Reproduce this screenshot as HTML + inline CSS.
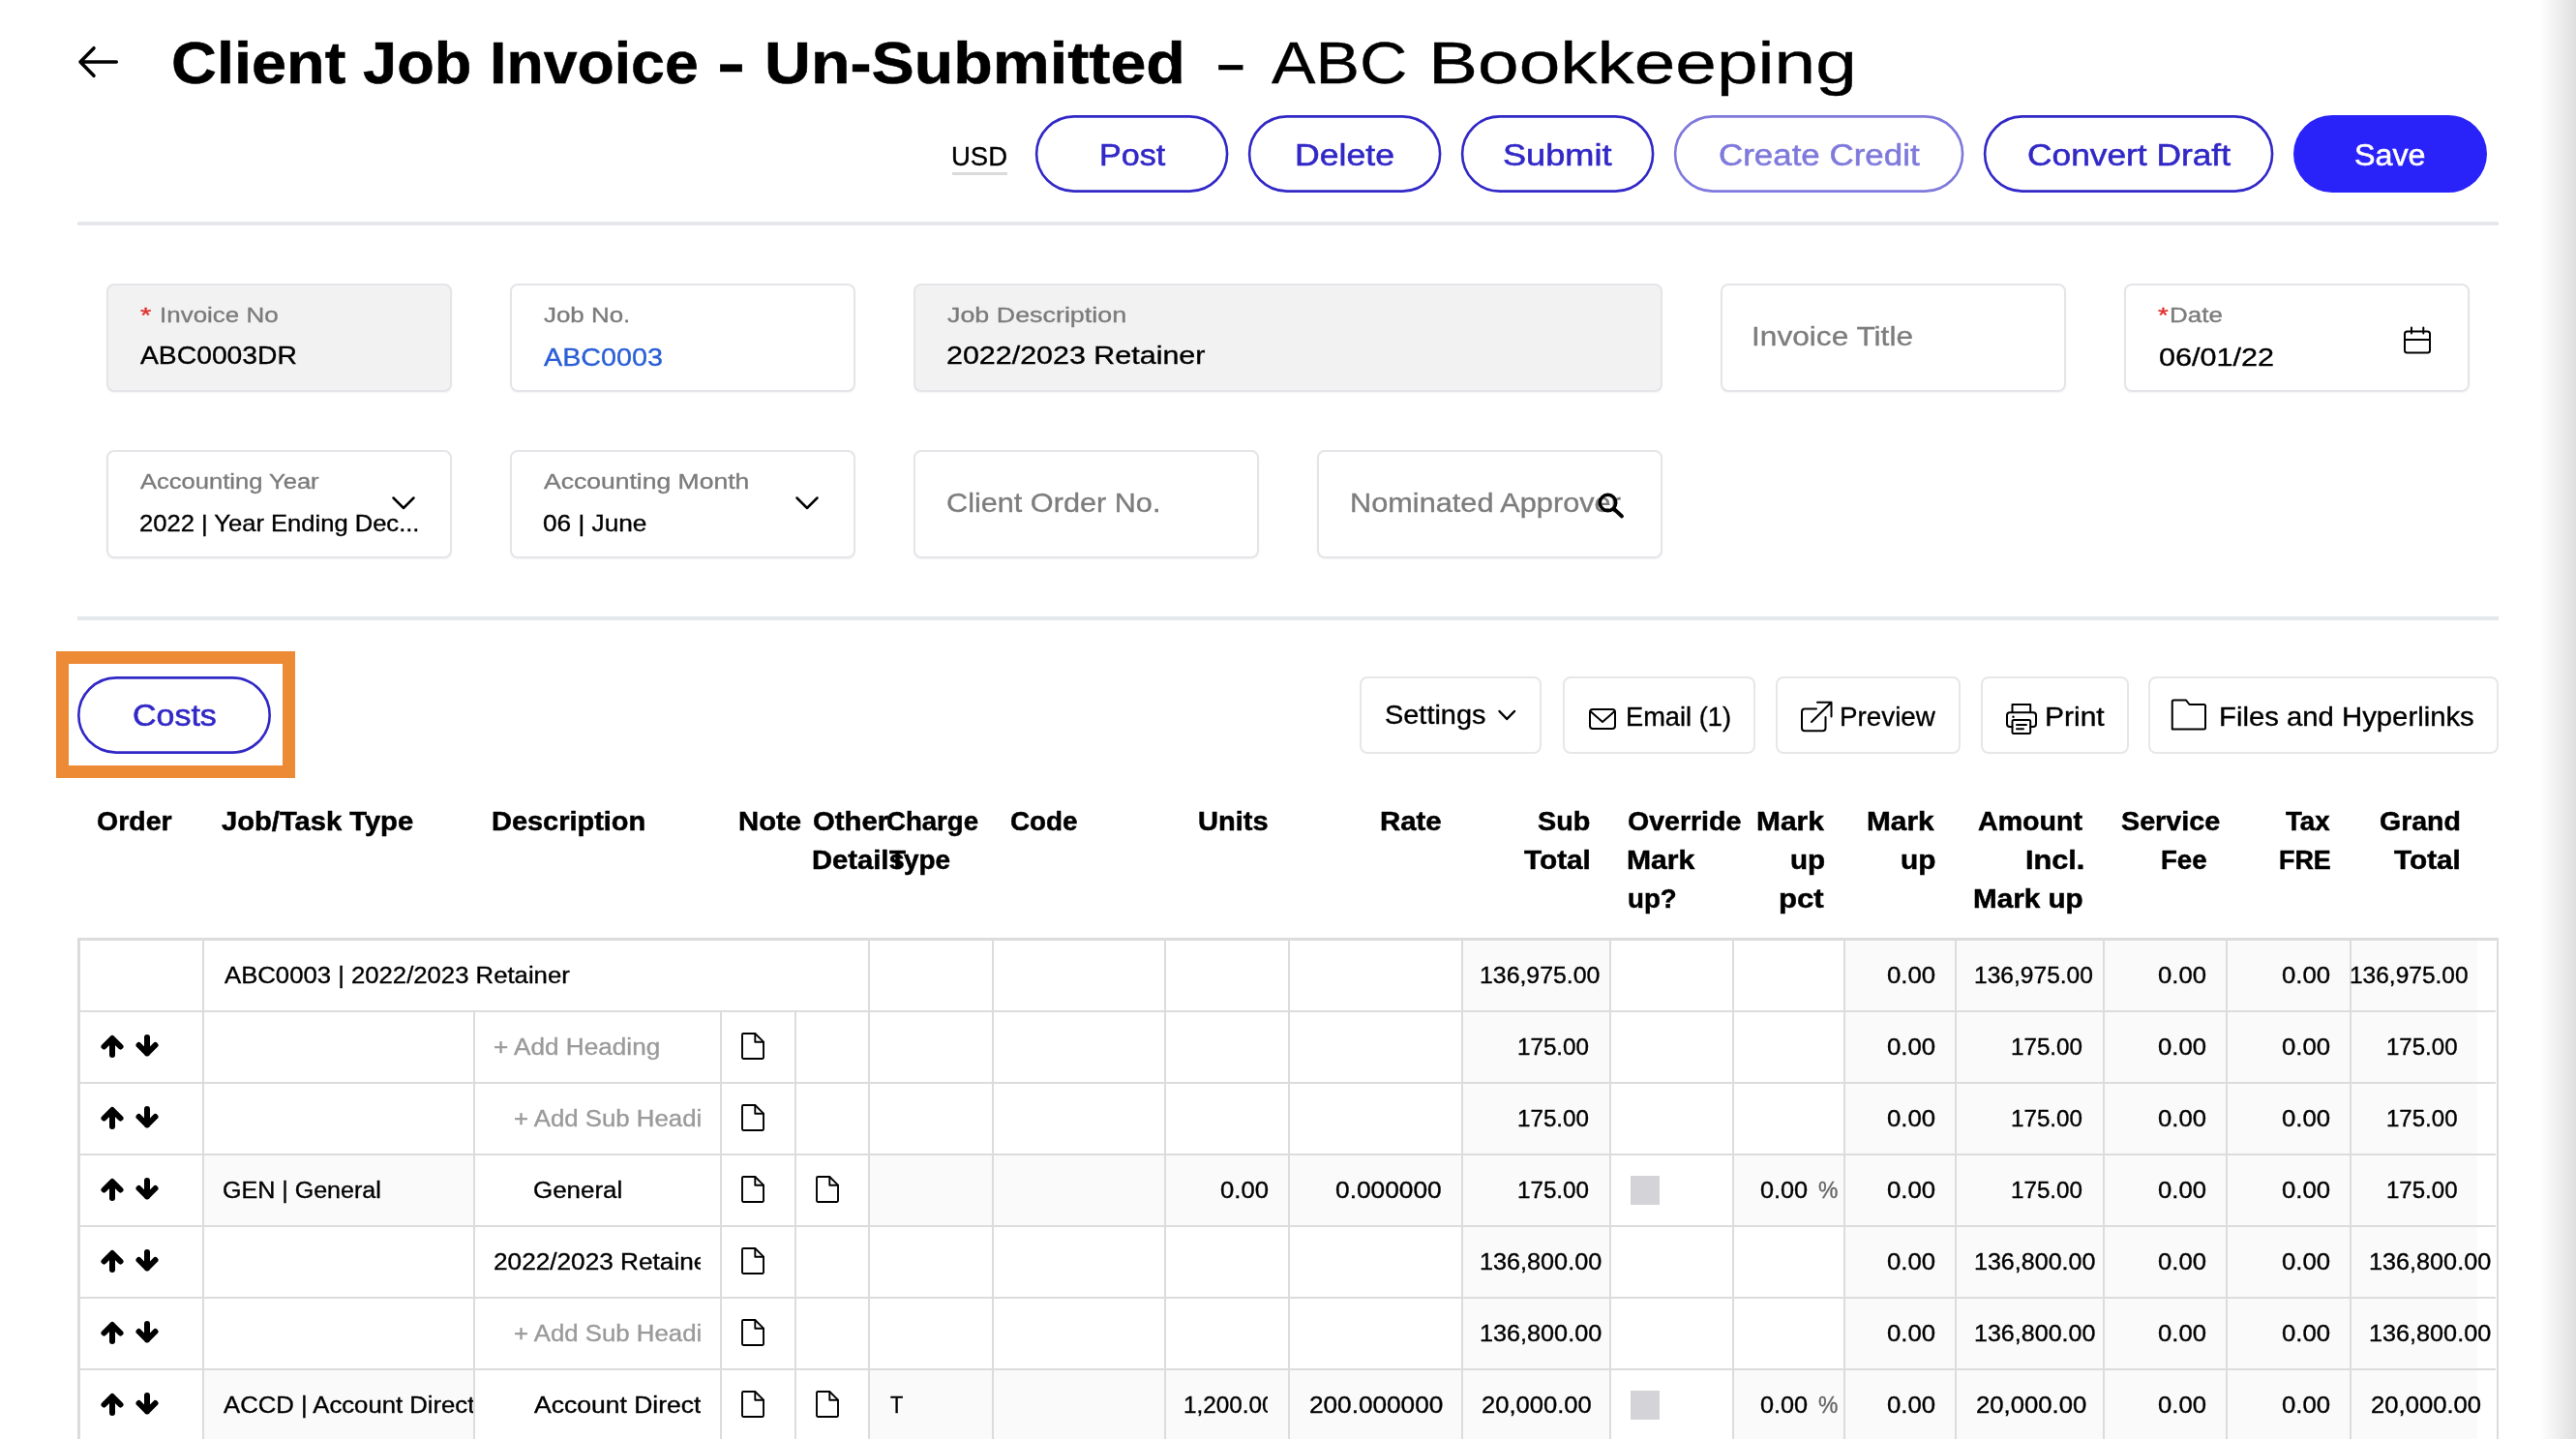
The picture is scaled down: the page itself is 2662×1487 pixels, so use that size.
<!DOCTYPE html>
<html lang="en"><head><meta charset="utf-8"><title>Client Job Invoice - Un-Submitted - ABC Bookkeeping</title>
<style>
html,body{margin:0;padding:0;background:#fff;width:2662px;height:1487px;overflow:hidden}
body{font-family:'Liberation Sans',sans-serif;color:#000}
#root{position:absolute;left:0;top:0;width:2662px;height:1487px;overflow:hidden;background:#fff}
.b{position:absolute;display:block}
.t{position:absolute;white-space:pre;line-height:1;transform-origin:0 0;display:block}
.clip{position:absolute;overflow:hidden}
.tx{position:absolute;left:0;top:0;width:2662px;height:1487px;will-change:transform}
</style></head>
<body>
<div id="root">
<div class="b" style="left:2624px;top:0px;width:38px;height:1487px;background:linear-gradient(to right,#fff,#dfdfdf);"></div>
<svg class="b" style="left:78px;top:44px;" width="48" height="40" viewBox="0 0 48 40" fill="none" stroke="#000" stroke-linecap="round" stroke-linejoin="round"><path d="M42.3 20H5M19 5.7L5 20L19 34.3" stroke-width="3.5"/></svg>
<div class="b" style="left:984px;top:178px;width:57px;height:3px;background:#dadada;"></div>
<svg class="b" style="left:1069px;top:119px;" width="202" height="80" viewBox="0 0 202 80" fill="none"><rect x="2.10" y="1.40" width="197.00" height="77.20" rx="38.70" stroke="#3128c6" stroke-width="2.6"/></svg>
<svg class="b" style="left:1289px;top:119px;" width="202" height="80" viewBox="0 0 202 80" fill="none"><rect x="2.10" y="1.40" width="197.00" height="77.20" rx="38.70" stroke="#3128c6" stroke-width="2.6"/></svg>
<svg class="b" style="left:1509px;top:119px;" width="202" height="80" viewBox="0 0 202 80" fill="none"><rect x="2.10" y="1.40" width="197.00" height="77.20" rx="38.70" stroke="#3128c6" stroke-width="2.6"/></svg>
<svg class="b" style="left:1729px;top:119px;opacity:0.62;" width="302" height="80" viewBox="0 0 302 80" fill="none"><rect x="2.10" y="1.40" width="297.00" height="77.20" rx="38.70" stroke="#3128c6" stroke-width="2.6"/></svg>
<svg class="b" style="left:2049px;top:119px;" width="302" height="80" viewBox="0 0 302 80" fill="none"><rect x="2.10" y="1.40" width="297.00" height="77.20" rx="38.70" stroke="#3128c6" stroke-width="2.6"/></svg>
<div class="b" style="left:2370px;top:119px;width:200px;height:80px;background:#2a23f9;border-radius:40px;"></div>
<div class="b" style="left:80px;top:229px;width:2502px;height:4px;background:#e5e7eb;"></div>
<div class="b" style="left:80px;top:637px;width:2502px;height:4px;background:#e3e8ec;"></div>
<div class="b" style="left:110px;top:293px;width:357px;height:112px;border:2px solid #e4e5e8;border-radius:8px;box-sizing:border-box;box-shadow:0 1px 2px rgba(0,0,0,.05);background:#f2f2f3;"></div>
<div class="b" style="left:527px;top:293px;width:357px;height:112px;border:2px solid #e4e5e8;border-radius:8px;box-sizing:border-box;box-shadow:0 1px 2px rgba(0,0,0,.05);"></div>
<div class="b" style="left:944px;top:293px;width:774px;height:112px;border:2px solid #e4e5e8;border-radius:8px;box-sizing:border-box;box-shadow:0 1px 2px rgba(0,0,0,.05);background:#f2f2f3;"></div>
<div class="b" style="left:1778px;top:293px;width:357px;height:112px;border:2px solid #e4e5e8;border-radius:8px;box-sizing:border-box;box-shadow:0 1px 2px rgba(0,0,0,.05);"></div>
<div class="b" style="left:2195px;top:293px;width:357px;height:112px;border:2px solid #e4e5e8;border-radius:8px;box-sizing:border-box;box-shadow:0 1px 2px rgba(0,0,0,.05);"></div>
<div class="b" style="left:110px;top:465px;width:357px;height:112px;border:2px solid #e4e5e8;border-radius:8px;box-sizing:border-box;box-shadow:0 1px 2px rgba(0,0,0,.05);"></div>
<div class="b" style="left:527px;top:465px;width:357px;height:112px;border:2px solid #e4e5e8;border-radius:8px;box-sizing:border-box;box-shadow:0 1px 2px rgba(0,0,0,.05);"></div>
<div class="b" style="left:944px;top:465px;width:357px;height:112px;border:2px solid #e4e5e8;border-radius:8px;box-sizing:border-box;box-shadow:0 1px 2px rgba(0,0,0,.05);"></div>
<div class="b" style="left:1361px;top:465px;width:357px;height:112px;border:2px solid #e4e5e8;border-radius:8px;box-sizing:border-box;box-shadow:0 1px 2px rgba(0,0,0,.05);"></div>
<svg class="b" style="left:403px;top:510px;" width="28" height="20" viewBox="0 0 28 20" fill="none" stroke="#000" stroke-linecap="round" stroke-linejoin="round"><path d="M3.5 4.5L14 15L24.5 4.5" stroke-width="2.5"/></svg>
<svg class="b" style="left:820px;top:510px;" width="28" height="20" viewBox="0 0 28 20" fill="none" stroke="#000" stroke-linecap="round" stroke-linejoin="round"><path d="M3.5 4.5L14 15L24.5 4.5" stroke-width="2.5"/></svg>
<svg class="b" style="left:2482px;top:336px;" width="32" height="32" viewBox="0 0 32 32" fill="none" stroke="#000" stroke-linecap="round" stroke-linejoin="round"><rect x="3" y="6.5" width="26" height="22" rx="2.5" stroke-width="2"/><path d="M3 15H29M10 2.5V8.5M22.3 2.5V8.5" stroke-width="2"/></svg>
<div class="b" style="left:58px;top:673px;width:247px;height:131px;border:13px solid #ec8a35;box-sizing:border-box;"></div>
<svg class="b" style="left:80px;top:699px;" width="202" height="80" viewBox="0 0 202 80" fill="none"><rect x="1.30" y="1.40" width="197.40" height="77.20" rx="38.70" stroke="#3128c6" stroke-width="2.6"/></svg>
<div class="b" style="left:1405px;top:699px;width:188px;height:80px;border:2px solid #e6e7e9;border-radius:8px;box-sizing:border-box;"></div>
<div class="b" style="left:1615px;top:699px;width:199px;height:80px;border:2px solid #e6e7e9;border-radius:8px;box-sizing:border-box;"></div>
<div class="b" style="left:1835px;top:699px;width:191px;height:80px;border:2px solid #e6e7e9;border-radius:8px;box-sizing:border-box;"></div>
<div class="b" style="left:2047px;top:699px;width:153px;height:80px;border:2px solid #e6e7e9;border-radius:8px;box-sizing:border-box;"></div>
<div class="b" style="left:2220px;top:699px;width:362px;height:80px;border:2px solid #e6e7e9;border-radius:8px;box-sizing:border-box;"></div>
<svg class="b" style="left:1545px;top:730px;" width="24" height="18" viewBox="0 0 24 18" fill="none" stroke="#000" stroke-linecap="round" stroke-linejoin="round"><path d="M4.5 5L12.2 13L20 5" stroke-width="2.5"/></svg>
<svg class="b" style="left:1640px;top:730px;" width="32" height="26" viewBox="0 0 32 26" fill="none" stroke="#000" stroke-linecap="round" stroke-linejoin="round"><rect x="3" y="3" width="26" height="20" rx="3" stroke-width="2"/><path d="M4 5.5L16 16L28 5.5" stroke-width="2"/></svg>
<svg class="b" style="left:1859px;top:723px;" width="36" height="36" viewBox="0 0 36 36" fill="none" stroke="#000" stroke-linecap="round" stroke-linejoin="round"><path d="M18 9.5H6a3 3 0 0 0-3 3V29.3a3 3 0 0 0 3 3H24.5a3 3 0 0 0 3-3V18" stroke-width="2"/><path d="M13 23L33.5 2.7M19 2.7H33.5V17.5" stroke-width="2"/></svg>
<svg class="b" style="left:2071px;top:725px;" width="36" height="36" viewBox="0 0 36 36" fill="none" stroke="#000" stroke-linecap="round" stroke-linejoin="round"><path d="M8.5 11V3H27.2V11" stroke-width="2"/><path d="M8.5 26H6a3 3 0 0 1-3-3V14.3a3 3 0 0 1 3-3H30a3 3 0 0 1 3 3V23a3 3 0 0 1-3 3H27.2" stroke-width="2"/><rect x="8.5" y="19" width="18.7" height="14" rx="1.5" stroke-width="2"/><path d="M13 24H23M13 28.3H20" stroke-width="2"/><circle cx="9.5" cy="15.8" r="1.2" fill="#000" stroke="none"/></svg>
<svg class="b" style="left:2241px;top:720px;" width="42" height="38" viewBox="0 0 42 38" fill="none" stroke="#000" stroke-linecap="round" stroke-linejoin="round"><path d="M3.75 33.5V5a1.5 1.5 0 0 1 1.5-1.5H18l3.5 4.5H36.5a1.5 1.5 0 0 1 1.5 1.5V32a1.5 1.5 0 0 1-1.5 1.5H5.25a1.5 1.5 0 0 1-1.5-1.5z" stroke-width="2"/></svg>
<div class="b" style="left:1512px;top:972px;width:151px;height:72px;background:#fafafa;"></div>
<div class="b" style="left:1907px;top:972px;width:113px;height:72px;background:#fafafa;"></div>
<div class="b" style="left:2022px;top:972px;width:151px;height:72px;background:#fafafa;"></div>
<div class="b" style="left:2175px;top:972px;width:125px;height:72px;background:#fafafa;"></div>
<div class="b" style="left:2302px;top:972px;width:126px;height:72px;background:#fafafa;"></div>
<div class="b" style="left:2430px;top:972px;width:130px;height:72px;background:#fafafa;"></div>
<div class="b" style="left:1512px;top:1046px;width:151px;height:72px;background:#fafafa;"></div>
<div class="b" style="left:1907px;top:1046px;width:113px;height:72px;background:#fafafa;"></div>
<div class="b" style="left:2022px;top:1046px;width:151px;height:72px;background:#fafafa;"></div>
<div class="b" style="left:2175px;top:1046px;width:125px;height:72px;background:#fafafa;"></div>
<div class="b" style="left:2302px;top:1046px;width:126px;height:72px;background:#fafafa;"></div>
<div class="b" style="left:2430px;top:1046px;width:130px;height:72px;background:#fafafa;"></div>
<div class="b" style="left:1512px;top:1120px;width:151px;height:72px;background:#fafafa;"></div>
<div class="b" style="left:1907px;top:1120px;width:113px;height:72px;background:#fafafa;"></div>
<div class="b" style="left:2022px;top:1120px;width:151px;height:72px;background:#fafafa;"></div>
<div class="b" style="left:2175px;top:1120px;width:125px;height:72px;background:#fafafa;"></div>
<div class="b" style="left:2302px;top:1120px;width:126px;height:72px;background:#fafafa;"></div>
<div class="b" style="left:2430px;top:1120px;width:130px;height:72px;background:#fafafa;"></div>
<div class="b" style="left:1512px;top:1194px;width:151px;height:72px;background:#fafafa;"></div>
<div class="b" style="left:1907px;top:1194px;width:113px;height:72px;background:#fafafa;"></div>
<div class="b" style="left:2022px;top:1194px;width:151px;height:72px;background:#fafafa;"></div>
<div class="b" style="left:2175px;top:1194px;width:125px;height:72px;background:#fafafa;"></div>
<div class="b" style="left:2302px;top:1194px;width:126px;height:72px;background:#fafafa;"></div>
<div class="b" style="left:2430px;top:1194px;width:130px;height:72px;background:#fafafa;"></div>
<div class="b" style="left:211px;top:1194px;width:278px;height:72px;background:#fafafa;"></div>
<div class="b" style="left:899px;top:1194px;width:126px;height:72px;background:#fafafa;"></div>
<div class="b" style="left:1027px;top:1194px;width:176px;height:72px;background:#fafafa;"></div>
<div class="b" style="left:1205px;top:1194px;width:126px;height:72px;background:#fafafa;"></div>
<div class="b" style="left:1333px;top:1194px;width:177px;height:72px;background:#fafafa;"></div>
<div class="b" style="left:1792px;top:1194px;width:113px;height:72px;background:#fafafa;"></div>
<div class="b" style="left:1512px;top:1268px;width:151px;height:72px;background:#fafafa;"></div>
<div class="b" style="left:1907px;top:1268px;width:113px;height:72px;background:#fafafa;"></div>
<div class="b" style="left:2022px;top:1268px;width:151px;height:72px;background:#fafafa;"></div>
<div class="b" style="left:2175px;top:1268px;width:125px;height:72px;background:#fafafa;"></div>
<div class="b" style="left:2302px;top:1268px;width:126px;height:72px;background:#fafafa;"></div>
<div class="b" style="left:2430px;top:1268px;width:130px;height:72px;background:#fafafa;"></div>
<div class="b" style="left:1512px;top:1342px;width:151px;height:72px;background:#fafafa;"></div>
<div class="b" style="left:1907px;top:1342px;width:113px;height:72px;background:#fafafa;"></div>
<div class="b" style="left:2022px;top:1342px;width:151px;height:72px;background:#fafafa;"></div>
<div class="b" style="left:2175px;top:1342px;width:125px;height:72px;background:#fafafa;"></div>
<div class="b" style="left:2302px;top:1342px;width:126px;height:72px;background:#fafafa;"></div>
<div class="b" style="left:2430px;top:1342px;width:130px;height:72px;background:#fafafa;"></div>
<div class="b" style="left:1512px;top:1416px;width:151px;height:71px;background:#fafafa;"></div>
<div class="b" style="left:1907px;top:1416px;width:113px;height:71px;background:#fafafa;"></div>
<div class="b" style="left:2022px;top:1416px;width:151px;height:71px;background:#fafafa;"></div>
<div class="b" style="left:2175px;top:1416px;width:125px;height:71px;background:#fafafa;"></div>
<div class="b" style="left:2302px;top:1416px;width:126px;height:71px;background:#fafafa;"></div>
<div class="b" style="left:2430px;top:1416px;width:130px;height:71px;background:#fafafa;"></div>
<div class="b" style="left:211px;top:1416px;width:278px;height:71px;background:#fafafa;"></div>
<div class="b" style="left:899px;top:1416px;width:126px;height:71px;background:#fafafa;"></div>
<div class="b" style="left:1027px;top:1416px;width:176px;height:71px;background:#fafafa;"></div>
<div class="b" style="left:1205px;top:1416px;width:126px;height:71px;background:#fafafa;"></div>
<div class="b" style="left:1333px;top:1416px;width:177px;height:71px;background:#fafafa;"></div>
<div class="b" style="left:1792px;top:1416px;width:113px;height:71px;background:#fafafa;"></div>
<div class="b" style="left:80px;top:969px;width:2502px;height:3px;background:#dcdcdc;"></div>
<div class="b" style="left:80px;top:969px;width:3px;height:518px;background:#dcdcdc;"></div>
<div class="b" style="left:2580px;top:969px;width:2px;height:518px;background:#dcdcdc;"></div>
<div class="b" style="left:83px;top:1044px;width:2496px;height:2px;background:#dcdcdc;"></div>
<div class="b" style="left:83px;top:1118px;width:2496px;height:2px;background:#dcdcdc;"></div>
<div class="b" style="left:83px;top:1192px;width:2496px;height:2px;background:#dcdcdc;"></div>
<div class="b" style="left:83px;top:1266px;width:2496px;height:2px;background:#dcdcdc;"></div>
<div class="b" style="left:83px;top:1340px;width:2496px;height:2px;background:#dcdcdc;"></div>
<div class="b" style="left:83px;top:1414px;width:2496px;height:2px;background:#dcdcdc;"></div>
<div class="b" style="left:209px;top:972px;width:2px;height:515px;background:#dcdcdc;"></div>
<div class="b" style="left:489px;top:1046px;width:2px;height:441px;background:#dcdcdc;"></div>
<div class="b" style="left:744px;top:1046px;width:2px;height:441px;background:#dcdcdc;"></div>
<div class="b" style="left:821px;top:1046px;width:2px;height:441px;background:#dcdcdc;"></div>
<div class="b" style="left:897px;top:972px;width:2px;height:515px;background:#dcdcdc;"></div>
<div class="b" style="left:1025px;top:972px;width:2px;height:515px;background:#dcdcdc;"></div>
<div class="b" style="left:1203px;top:972px;width:2px;height:515px;background:#dcdcdc;"></div>
<div class="b" style="left:1331px;top:972px;width:2px;height:515px;background:#dcdcdc;"></div>
<div class="b" style="left:1510px;top:972px;width:2px;height:515px;background:#dcdcdc;"></div>
<div class="b" style="left:1663px;top:972px;width:2px;height:515px;background:#dcdcdc;"></div>
<div class="b" style="left:1790px;top:972px;width:2px;height:515px;background:#dcdcdc;"></div>
<div class="b" style="left:1905px;top:972px;width:2px;height:515px;background:#dcdcdc;"></div>
<div class="b" style="left:2020px;top:972px;width:2px;height:515px;background:#dcdcdc;"></div>
<div class="b" style="left:2173px;top:972px;width:2px;height:515px;background:#dcdcdc;"></div>
<div class="b" style="left:2300px;top:972px;width:2px;height:515px;background:#dcdcdc;"></div>
<div class="b" style="left:2428px;top:972px;width:2px;height:515px;background:#dcdcdc;"></div>
<svg class="b" style="left:101px;top:1067px" width="30" height="30" viewBox="0 0 30 30" fill="none" stroke="#000" stroke-linecap="round" stroke-linejoin="round"><path d="M15 6.5V23M6.5 14.5L15 6L23.5 14.5" stroke-width="6"/></svg>
<svg class="b" style="left:136.5px;top:1066px" width="30" height="30" viewBox="0 0 30 30" fill="none" stroke="#000" stroke-linecap="round" stroke-linejoin="round"><path d="M15 6V22.5M6.5 14L15 22.5L23.5 14" stroke-width="6"/></svg>
<svg class="b" style="left:101px;top:1141px" width="30" height="30" viewBox="0 0 30 30" fill="none" stroke="#000" stroke-linecap="round" stroke-linejoin="round"><path d="M15 6.5V23M6.5 14.5L15 6L23.5 14.5" stroke-width="6"/></svg>
<svg class="b" style="left:136.5px;top:1140px" width="30" height="30" viewBox="0 0 30 30" fill="none" stroke="#000" stroke-linecap="round" stroke-linejoin="round"><path d="M15 6V22.5M6.5 14L15 22.5L23.5 14" stroke-width="6"/></svg>
<svg class="b" style="left:101px;top:1215px" width="30" height="30" viewBox="0 0 30 30" fill="none" stroke="#000" stroke-linecap="round" stroke-linejoin="round"><path d="M15 6.5V23M6.5 14.5L15 6L23.5 14.5" stroke-width="6"/></svg>
<svg class="b" style="left:136.5px;top:1214px" width="30" height="30" viewBox="0 0 30 30" fill="none" stroke="#000" stroke-linecap="round" stroke-linejoin="round"><path d="M15 6V22.5M6.5 14L15 22.5L23.5 14" stroke-width="6"/></svg>
<svg class="b" style="left:101px;top:1289px" width="30" height="30" viewBox="0 0 30 30" fill="none" stroke="#000" stroke-linecap="round" stroke-linejoin="round"><path d="M15 6.5V23M6.5 14.5L15 6L23.5 14.5" stroke-width="6"/></svg>
<svg class="b" style="left:136.5px;top:1288px" width="30" height="30" viewBox="0 0 30 30" fill="none" stroke="#000" stroke-linecap="round" stroke-linejoin="round"><path d="M15 6V22.5M6.5 14L15 22.5L23.5 14" stroke-width="6"/></svg>
<svg class="b" style="left:101px;top:1363px" width="30" height="30" viewBox="0 0 30 30" fill="none" stroke="#000" stroke-linecap="round" stroke-linejoin="round"><path d="M15 6.5V23M6.5 14.5L15 6L23.5 14.5" stroke-width="6"/></svg>
<svg class="b" style="left:136.5px;top:1362px" width="30" height="30" viewBox="0 0 30 30" fill="none" stroke="#000" stroke-linecap="round" stroke-linejoin="round"><path d="M15 6V22.5M6.5 14L15 22.5L23.5 14" stroke-width="6"/></svg>
<svg class="b" style="left:101px;top:1437px" width="30" height="30" viewBox="0 0 30 30" fill="none" stroke="#000" stroke-linecap="round" stroke-linejoin="round"><path d="M15 6.5V23M6.5 14.5L15 6L23.5 14.5" stroke-width="6"/></svg>
<svg class="b" style="left:136.5px;top:1436px" width="30" height="30" viewBox="0 0 30 30" fill="none" stroke="#000" stroke-linecap="round" stroke-linejoin="round"><path d="M15 6V22.5M6.5 14L15 22.5L23.5 14" stroke-width="6"/></svg>
<svg class="b" style="left:765px;top:1066px" width="26" height="30" viewBox="0 0 26 30" fill="none" stroke="#000" stroke-width="1.9" stroke-linejoin="round" stroke-linecap="round"><path d="M3.2 2H15.3L24 10.7V26.8a1.2 1.2 0 0 1-1.2 1.2H3.2A1.2 1.2 0 0 1 2 26.8V3.2A1.2 1.2 0 0 1 3.2 2Z"/><path d="M15.3 2.2V10.7H23.8"/></svg>
<svg class="b" style="left:765px;top:1140px" width="26" height="30" viewBox="0 0 26 30" fill="none" stroke="#000" stroke-width="1.9" stroke-linejoin="round" stroke-linecap="round"><path d="M3.2 2H15.3L24 10.7V26.8a1.2 1.2 0 0 1-1.2 1.2H3.2A1.2 1.2 0 0 1 2 26.8V3.2A1.2 1.2 0 0 1 3.2 2Z"/><path d="M15.3 2.2V10.7H23.8"/></svg>
<svg class="b" style="left:765px;top:1214px" width="26" height="30" viewBox="0 0 26 30" fill="none" stroke="#000" stroke-width="1.9" stroke-linejoin="round" stroke-linecap="round"><path d="M3.2 2H15.3L24 10.7V26.8a1.2 1.2 0 0 1-1.2 1.2H3.2A1.2 1.2 0 0 1 2 26.8V3.2A1.2 1.2 0 0 1 3.2 2Z"/><path d="M15.3 2.2V10.7H23.8"/></svg>
<svg class="b" style="left:841.7px;top:1214px" width="26" height="30" viewBox="0 0 26 30" fill="none" stroke="#000" stroke-width="1.9" stroke-linejoin="round" stroke-linecap="round"><path d="M3.2 2H15.3L24 10.7V26.8a1.2 1.2 0 0 1-1.2 1.2H3.2A1.2 1.2 0 0 1 2 26.8V3.2A1.2 1.2 0 0 1 3.2 2Z"/><path d="M15.3 2.2V10.7H23.8"/></svg>
<svg class="b" style="left:765px;top:1288px" width="26" height="30" viewBox="0 0 26 30" fill="none" stroke="#000" stroke-width="1.9" stroke-linejoin="round" stroke-linecap="round"><path d="M3.2 2H15.3L24 10.7V26.8a1.2 1.2 0 0 1-1.2 1.2H3.2A1.2 1.2 0 0 1 2 26.8V3.2A1.2 1.2 0 0 1 3.2 2Z"/><path d="M15.3 2.2V10.7H23.8"/></svg>
<svg class="b" style="left:765px;top:1362px" width="26" height="30" viewBox="0 0 26 30" fill="none" stroke="#000" stroke-width="1.9" stroke-linejoin="round" stroke-linecap="round"><path d="M3.2 2H15.3L24 10.7V26.8a1.2 1.2 0 0 1-1.2 1.2H3.2A1.2 1.2 0 0 1 2 26.8V3.2A1.2 1.2 0 0 1 3.2 2Z"/><path d="M15.3 2.2V10.7H23.8"/></svg>
<svg class="b" style="left:765px;top:1436px" width="26" height="30" viewBox="0 0 26 30" fill="none" stroke="#000" stroke-width="1.9" stroke-linejoin="round" stroke-linecap="round"><path d="M3.2 2H15.3L24 10.7V26.8a1.2 1.2 0 0 1-1.2 1.2H3.2A1.2 1.2 0 0 1 2 26.8V3.2A1.2 1.2 0 0 1 3.2 2Z"/><path d="M15.3 2.2V10.7H23.8"/></svg>
<svg class="b" style="left:841.7px;top:1436px" width="26" height="30" viewBox="0 0 26 30" fill="none" stroke="#000" stroke-width="1.9" stroke-linejoin="round" stroke-linecap="round"><path d="M3.2 2H15.3L24 10.7V26.8a1.2 1.2 0 0 1-1.2 1.2H3.2A1.2 1.2 0 0 1 2 26.8V3.2A1.2 1.2 0 0 1 3.2 2Z"/><path d="M15.3 2.2V10.7H23.8"/></svg>
<div class="b" style="left:1685px;top:1215px;width:30px;height:30px;background:#d4d4d8;"></div>
<div class="b" style="left:1685px;top:1437px;width:30px;height:30px;background:#d4d4d8;"></div>
<div class="tx">
<span class="t" style="left:176.74px;top:34.00px;font-size:62.0px;transform:scaleX(1.0471);font-weight:700;-webkit-text-stroke:0.5px;">Client</span>
<span class="t" style="left:374.50px;top:34.00px;font-size:62.0px;transform:scaleX(1.0187);font-weight:700;-webkit-text-stroke:0.5px;">Job</span>
<span class="t" style="left:505.99px;top:34.00px;font-size:62.0px;transform:scaleX(1.0096);font-weight:700;-webkit-text-stroke:0.5px;">Invoice</span>
<span class="t" style="left:741.43px;top:34.00px;font-size:62.0px;transform:scaleX(1.4124);font-weight:700;-webkit-text-stroke:0.5px;">-</span>
<span class="t" style="left:790.49px;top:34.00px;font-size:62.0px;transform:scaleX(1.0700);font-weight:700;-webkit-text-stroke:0.5px;">Un-Submitted</span>
<span class="t" style="left:1255.33px;top:34.00px;font-size:62.0px;transform:scaleX(1.6276);-webkit-text-stroke:0.35px;">-</span>
<span class="t" style="left:1313.75px;top:34.00px;font-size:62.0px;transform:scaleX(1.1000);-webkit-text-stroke:0.35px;">ABC</span>
<span class="t" style="left:1476.39px;top:34.00px;font-size:62.0px;transform:scaleX(1.2349);-webkit-text-stroke:0.35px;">Bookkeeping</span>
<span class="t" style="left:983.00px;top:148.50px;font-size:27.0px;transform:scaleX(1.0185);-webkit-text-stroke:0.35px;">USD</span>
<span class="t" style="left:1136.00px;top:144.50px;font-size:31.0px;transform:scaleX(1.1000);color:#3128c6;-webkit-text-stroke:0.55px;">Post</span>
<span class="t" style="left:1337.99px;top:144.50px;font-size:31.0px;transform:scaleX(1.1495);color:#3128c6;-webkit-text-stroke:0.55px;">Delete</span>
<span class="t" style="left:1553.00px;top:144.50px;font-size:31.0px;transform:scaleX(1.1667);color:#3128c6;-webkit-text-stroke:0.55px;">Submit</span>
<span class="t" style="left:1776.00px;top:144.50px;font-size:31.0px;transform:scaleX(1.1261);color:#3128c6;-webkit-text-stroke:0.55px;opacity:0.62;">Create Credit</span>
<span class="t" style="left:2094.70px;top:144.50px;font-size:31.0px;transform:scaleX(1.1391);color:#3128c6;-webkit-text-stroke:0.55px;">Convert Draft</span>
<span class="t" style="left:2432.99px;top:144.50px;font-size:31.0px;transform:scaleX(1.0406);color:#fff;-webkit-text-stroke:0.55px;">Save</span>
<span class="t" style="left:145.00px;top:315.00px;font-size:22.5px;transform:scaleX(1.2784);color:#e0302c;-webkit-text-stroke:0.35px;">*</span>
<span class="t" style="left:165.00px;top:315.00px;font-size:22.5px;transform:scaleX(1.1538);color:#7b7b7b;-webkit-text-stroke:0.35px;">Invoice No</span>
<span class="t" style="left:145.00px;top:354.25px;font-size:26.0px;transform:scaleX(1.0878);-webkit-text-stroke:0.35px;">ABC0003DR</span>
<span class="t" style="left:562.00px;top:315.00px;font-size:22.5px;transform:scaleX(1.1514);color:#7b7b7b;-webkit-text-stroke:0.35px;">Job No.</span>
<span class="t" style="left:562.00px;top:356.00px;font-size:26.0px;transform:scaleX(1.1046);color:#2a5fd6;-webkit-text-stroke:0.35px;">ABC0003</span>
<span class="t" style="left:978.60px;top:315.00px;font-size:22.5px;transform:scaleX(1.1935);color:#7b7b7b;-webkit-text-stroke:0.35px;">Job Description</span>
<span class="t" style="left:977.60px;top:354.25px;font-size:26.0px;transform:scaleX(1.1709);-webkit-text-stroke:0.35px;">2022/2023 Retainer</span>
<span class="t" style="left:1809.59px;top:333.50px;font-size:28.0px;transform:scaleX(1.1297);color:#7d7d7d;-webkit-text-stroke:0.35px;">Invoice Title</span>
<span class="t" style="left:2230.00px;top:315.00px;font-size:22.5px;transform:scaleX(1.2222);color:#e0302c;-webkit-text-stroke:0.35px;">*</span>
<span class="t" style="left:2242.00px;top:315.00px;font-size:22.5px;transform:scaleX(1.1556);color:#7b7b7b;-webkit-text-stroke:0.35px;">Date</span>
<span class="t" style="left:2231.31px;top:356.00px;font-size:26.0px;transform:scaleX(1.1758);-webkit-text-stroke:0.35px;">06/01/22</span>
<span class="t" style="left:145.00px;top:487.00px;font-size:22.5px;transform:scaleX(1.1350);color:#7b7b7b;-webkit-text-stroke:0.35px;">Accounting Year</span>
<span class="t" style="left:144.00px;top:528.75px;font-size:24.0px;transform:scaleX(1.0651);-webkit-text-stroke:0.35px;">2022 | Year Ending Dec...</span>
<span class="t" style="left:562.00px;top:487.00px;font-size:22.5px;transform:scaleX(1.1788);color:#7b7b7b;-webkit-text-stroke:0.35px;">Accounting Month</span>
<span class="t" style="left:561.00px;top:528.75px;font-size:24.0px;transform:scaleX(1.0928);-webkit-text-stroke:0.35px;">06 | June</span>
<span class="t" style="left:977.60px;top:506.00px;font-size:28.0px;transform:scaleX(1.0945);color:#7d7d7d;-webkit-text-stroke:0.35px;">Client Order No.</span>
<span class="t" style="left:1395.00px;top:506.00px;font-size:27.5px;transform:scaleX(1.1165);color:#7d7d7d;-webkit-text-stroke:0.35px;">Nominated Approver</span>
<span class="t" style="left:136.50px;top:724.00px;font-size:31.5px;transform:scaleX(1.0785);color:#3128c6;-webkit-text-stroke:0.55px;">Costs</span>
<span class="t" style="left:1430.75px;top:725.00px;font-size:27.5px;transform:scaleX(1.0510);-webkit-text-stroke:0.35px;">Settings</span>
<span class="t" style="left:1680.49px;top:727.00px;font-size:27.5px;transform:scaleX(0.9907);-webkit-text-stroke:0.35px;">Email (1)</span>
<span class="t" style="left:1901.01px;top:727.00px;font-size:27.5px;transform:scaleX(1.0104);-webkit-text-stroke:0.35px;">Preview</span>
<span class="t" style="left:2112.98px;top:727.00px;font-size:27.5px;transform:scaleX(1.0910);-webkit-text-stroke:0.35px;">Print</span>
<span class="t" style="left:2292.50px;top:727.00px;font-size:27.5px;transform:scaleX(1.0653);-webkit-text-stroke:0.35px;">Files and Hyperlinks</span>
<span class="t" style="left:99.99px;top:836.00px;font-size:27.0px;transform:scaleX(1.0550);font-weight:700;-webkit-text-stroke:0.5px;">Order</span>
<span class="t" style="left:228.50px;top:836.00px;font-size:27.0px;transform:scaleX(1.0792);font-weight:700;-webkit-text-stroke:0.5px;">Job/Task Type</span>
<span class="t" style="left:507.50px;top:836.00px;font-size:27.0px;transform:scaleX(1.0719);font-weight:700;-webkit-text-stroke:0.5px;">Description</span>
<span class="t" style="left:762.97px;top:836.00px;font-size:27.0px;transform:scaleX(1.0850);font-weight:700;-webkit-text-stroke:0.5px;">Note</span>
<span class="t" style="left:840.00px;top:836.00px;font-size:27.0px;transform:scaleX(1.0845);font-weight:700;-webkit-text-stroke:0.5px;">Other</span>
<span class="t" style="left:838.98px;top:876.00px;font-size:27.0px;transform:scaleX(1.0806);font-weight:700;-webkit-text-stroke:0.5px;">Details</span>
<span class="t" style="left:916.00px;top:836.00px;font-size:27.0px;transform:scaleX(1.0217);font-weight:700;-webkit-text-stroke:0.5px;">Charge</span>
<span class="t" style="left:918.50px;top:876.00px;font-size:27.0px;transform:scaleX(1.0329);font-weight:700;-webkit-text-stroke:0.5px;">Type</span>
<span class="t" style="left:1044.00px;top:836.00px;font-size:27.0px;transform:scaleX(1.0303);font-weight:700;-webkit-text-stroke:0.5px;">Code</span>
<span class="t" style="left:1238.00px;top:836.00px;font-size:27.0px;transform:scaleX(1.0758);font-weight:700;-webkit-text-stroke:0.5px;">Units</span>
<span class="t" style="left:1425.57px;top:836.00px;font-size:27.0px;transform:scaleX(1.0880);font-weight:700;-webkit-text-stroke:0.5px;">Rate</span>
<span class="t" style="left:1589.01px;top:836.00px;font-size:27.0px;transform:scaleX(1.0654);font-weight:700;-webkit-text-stroke:0.5px;">Sub</span>
<span class="t" style="left:1575.00px;top:876.00px;font-size:27.0px;transform:scaleX(1.1017);font-weight:700;-webkit-text-stroke:0.5px;">Total</span>
<span class="t" style="left:1682.39px;top:836.00px;font-size:27.0px;transform:scaleX(1.0564);font-weight:700;-webkit-text-stroke:0.5px;">Override</span>
<span class="t" style="left:1681.38px;top:876.00px;font-size:27.0px;transform:scaleX(1.1162);font-weight:700;-webkit-text-stroke:0.5px;">Mark</span>
<span class="t" style="left:1682.41px;top:916.00px;font-size:27.0px;transform:scaleX(1.0256);font-weight:700;-webkit-text-stroke:0.5px;">up?</span>
<span class="t" style="left:1814.69px;top:836.00px;font-size:27.0px;transform:scaleX(1.1065);font-weight:700;-webkit-text-stroke:0.5px;">Mark</span>
<span class="t" style="left:1849.51px;top:876.00px;font-size:27.0px;transform:scaleX(1.0970);font-weight:700;-webkit-text-stroke:0.5px;">up</span>
<span class="t" style="left:1838.43px;top:916.00px;font-size:27.0px;transform:scaleX(1.1513);font-weight:700;-webkit-text-stroke:0.5px;">pct</span>
<span class="t" style="left:1929.39px;top:836.00px;font-size:27.0px;transform:scaleX(1.1032);font-weight:700;-webkit-text-stroke:0.5px;">Mark</span>
<span class="t" style="left:1964.01px;top:876.00px;font-size:27.0px;transform:scaleX(1.1034);font-weight:700;-webkit-text-stroke:0.5px;">up</span>
<span class="t" style="left:2044.00px;top:836.00px;font-size:27.0px;transform:scaleX(1.0588);font-weight:700;-webkit-text-stroke:0.5px;">Amount</span>
<span class="t" style="left:2092.95px;top:876.00px;font-size:27.0px;transform:scaleX(1.1354);font-weight:700;-webkit-text-stroke:0.5px;">Incl.</span>
<span class="t" style="left:2038.99px;top:916.00px;font-size:27.0px;transform:scaleX(1.0981);font-weight:700;-webkit-text-stroke:0.5px;">Mark up</span>
<span class="t" style="left:2192.00px;top:836.00px;font-size:27.0px;transform:scaleX(1.0632);font-weight:700;-webkit-text-stroke:0.5px;">Service</span>
<span class="t" style="left:2233.00px;top:876.00px;font-size:27.0px;transform:scaleX(1.0222);font-weight:700;-webkit-text-stroke:0.5px;">Fee</span>
<span class="t" style="left:2362.00px;top:836.00px;font-size:27.0px;transform:scaleX(1.0222);font-weight:700;-webkit-text-stroke:0.5px;">Tax</span>
<span class="t" style="left:2354.61px;top:876.00px;font-size:27.0px;transform:scaleX(0.9963);font-weight:700;-webkit-text-stroke:0.5px;">FRE</span>
<span class="t" style="left:2459.00px;top:836.00px;font-size:27.0px;transform:scaleX(1.0546);font-weight:700;-webkit-text-stroke:0.5px;">Grand</span>
<span class="t" style="left:2474.00px;top:876.00px;font-size:27.0px;transform:scaleX(1.1017);font-weight:700;-webkit-text-stroke:0.5px;">Total</span>
<span class="t" style="left:231.50px;top:997.00px;font-size:23.5px;transform:scaleX(1.0936);-webkit-text-stroke:0.35px;">ABC0003 | 2022/2023 Retainer</span>
<span class="t" style="left:1529.00px;top:997.00px;font-size:23.5px;transform:scaleX(1.0574);-webkit-text-stroke:0.35px;">136,975.00</span>
<span class="t" style="left:1949.70px;top:997.00px;font-size:23.5px;transform:scaleX(1.0955);-webkit-text-stroke:0.35px;">0.00</span>
<span class="t" style="left:2039.71px;top:997.00px;font-size:23.5px;transform:scaleX(1.0452);-webkit-text-stroke:0.35px;">136,975.00</span>
<span class="t" style="left:2230.00px;top:997.00px;font-size:23.5px;transform:scaleX(1.0909);-webkit-text-stroke:0.35px;">0.00</span>
<span class="t" style="left:2357.60px;top:997.00px;font-size:23.5px;transform:scaleX(1.0955);-webkit-text-stroke:0.35px;">0.00</span>
<span class="t" style="left:2428.01px;top:997.00px;font-size:23.5px;transform:scaleX(1.0418);-webkit-text-stroke:0.35px;">136,975.00</span>
<span class="t" style="left:510.40px;top:1071.00px;font-size:23.5px;transform:scaleX(1.1124);color:#9a9a9a;-webkit-text-stroke:0.35px;">+ Add Heading</span>
<span class="t" style="left:1567.51px;top:1071.00px;font-size:23.5px;transform:scaleX(1.0290);-webkit-text-stroke:0.35px;">175.00</span>
<span class="t" style="left:1949.70px;top:1071.00px;font-size:23.5px;transform:scaleX(1.0955);-webkit-text-stroke:0.35px;">0.00</span>
<span class="t" style="left:2078.01px;top:1071.00px;font-size:23.5px;transform:scaleX(1.0290);-webkit-text-stroke:0.35px;">175.00</span>
<span class="t" style="left:2230.00px;top:1071.00px;font-size:23.5px;transform:scaleX(1.0909);-webkit-text-stroke:0.35px;">0.00</span>
<span class="t" style="left:2357.60px;top:1071.00px;font-size:23.5px;transform:scaleX(1.0955);-webkit-text-stroke:0.35px;">0.00</span>
<span class="t" style="left:2465.52px;top:1071.00px;font-size:23.5px;transform:scaleX(1.0233);-webkit-text-stroke:0.35px;">175.00</span>
<div class="clip" style="left:491px;width:233px;top:1135.00px;height:43.5px;"><span class="t" style="left:39.60px;top:10px;font-size:23.5px;transform:scaleX(1.0971);color:#9a9a9a;-webkit-text-stroke:0.35px;">+ Add Sub Heading</span></div>
<span class="t" style="left:1567.51px;top:1145.00px;font-size:23.5px;transform:scaleX(1.0290);-webkit-text-stroke:0.35px;">175.00</span>
<span class="t" style="left:1949.70px;top:1145.00px;font-size:23.5px;transform:scaleX(1.0955);-webkit-text-stroke:0.35px;">0.00</span>
<span class="t" style="left:2078.01px;top:1145.00px;font-size:23.5px;transform:scaleX(1.0290);-webkit-text-stroke:0.35px;">175.00</span>
<span class="t" style="left:2230.00px;top:1145.00px;font-size:23.5px;transform:scaleX(1.0909);-webkit-text-stroke:0.35px;">0.00</span>
<span class="t" style="left:2357.60px;top:1145.00px;font-size:23.5px;transform:scaleX(1.0955);-webkit-text-stroke:0.35px;">0.00</span>
<span class="t" style="left:2465.52px;top:1145.00px;font-size:23.5px;transform:scaleX(1.0233);-webkit-text-stroke:0.35px;">175.00</span>
<span class="t" style="left:230.00px;top:1219.00px;font-size:23.5px;transform:scaleX(1.0658);-webkit-text-stroke:0.35px;">GEN | General</span>
<span class="t" style="left:550.69px;top:1219.00px;font-size:23.5px;transform:scaleX(1.1025);-webkit-text-stroke:0.35px;">General</span>
<span class="t" style="left:1260.51px;top:1219.00px;font-size:23.5px;transform:scaleX(1.0910);-webkit-text-stroke:0.35px;">0.00</span>
<span class="t" style="left:1379.59px;top:1219.00px;font-size:23.5px;transform:scaleX(1.1196);-webkit-text-stroke:0.35px;">0.000000</span>
<span class="t" style="left:1818.61px;top:1219.00px;font-size:23.5px;transform:scaleX(1.0751);-webkit-text-stroke:0.35px;">0.00</span>
<span class="t" style="left:1878.79px;top:1219.00px;font-size:23.5px;transform:scaleX(0.9752);color:#666;-webkit-text-stroke:0.35px;">%</span>
<span class="t" style="left:1567.51px;top:1219.00px;font-size:23.5px;transform:scaleX(1.0290);-webkit-text-stroke:0.35px;">175.00</span>
<span class="t" style="left:1949.70px;top:1219.00px;font-size:23.5px;transform:scaleX(1.0955);-webkit-text-stroke:0.35px;">0.00</span>
<span class="t" style="left:2078.01px;top:1219.00px;font-size:23.5px;transform:scaleX(1.0290);-webkit-text-stroke:0.35px;">175.00</span>
<span class="t" style="left:2230.00px;top:1219.00px;font-size:23.5px;transform:scaleX(1.0909);-webkit-text-stroke:0.35px;">0.00</span>
<span class="t" style="left:2357.60px;top:1219.00px;font-size:23.5px;transform:scaleX(1.0955);-webkit-text-stroke:0.35px;">0.00</span>
<span class="t" style="left:2465.52px;top:1219.00px;font-size:23.5px;transform:scaleX(1.0233);-webkit-text-stroke:0.35px;">175.00</span>
<div class="clip" style="left:491px;width:233px;top:1283.00px;height:43.5px;"><span class="t" style="left:19.40px;top:10px;font-size:23.5px;transform:scaleX(1.1146);-webkit-text-stroke:0.35px;">2022/2023 Retainer</span></div>
<span class="t" style="left:1529.00px;top:1293.00px;font-size:23.5px;transform:scaleX(1.0730);-webkit-text-stroke:0.35px;">136,800.00</span>
<span class="t" style="left:1949.70px;top:1293.00px;font-size:23.5px;transform:scaleX(1.0955);-webkit-text-stroke:0.35px;">0.00</span>
<span class="t" style="left:2039.70px;top:1293.00px;font-size:23.5px;transform:scaleX(1.0661);-webkit-text-stroke:0.35px;">136,800.00</span>
<span class="t" style="left:2230.00px;top:1293.00px;font-size:23.5px;transform:scaleX(1.0909);-webkit-text-stroke:0.35px;">0.00</span>
<span class="t" style="left:2357.60px;top:1293.00px;font-size:23.5px;transform:scaleX(1.0955);-webkit-text-stroke:0.35px;">0.00</span>
<span class="t" style="left:2447.60px;top:1293.00px;font-size:23.5px;transform:scaleX(1.0730);-webkit-text-stroke:0.35px;">136,800.00</span>
<div class="clip" style="left:491px;width:233px;top:1357.00px;height:43.5px;"><span class="t" style="left:39.60px;top:10px;font-size:23.5px;transform:scaleX(1.0971);color:#9a9a9a;-webkit-text-stroke:0.35px;">+ Add Sub Heading</span></div>
<span class="t" style="left:1529.00px;top:1367.00px;font-size:23.5px;transform:scaleX(1.0730);-webkit-text-stroke:0.35px;">136,800.00</span>
<span class="t" style="left:1949.70px;top:1367.00px;font-size:23.5px;transform:scaleX(1.0955);-webkit-text-stroke:0.35px;">0.00</span>
<span class="t" style="left:2039.70px;top:1367.00px;font-size:23.5px;transform:scaleX(1.0661);-webkit-text-stroke:0.35px;">136,800.00</span>
<span class="t" style="left:2230.00px;top:1367.00px;font-size:23.5px;transform:scaleX(1.0909);-webkit-text-stroke:0.35px;">0.00</span>
<span class="t" style="left:2357.60px;top:1367.00px;font-size:23.5px;transform:scaleX(1.0955);-webkit-text-stroke:0.35px;">0.00</span>
<span class="t" style="left:2447.60px;top:1367.00px;font-size:23.5px;transform:scaleX(1.0730);-webkit-text-stroke:0.35px;">136,800.00</span>
<div class="clip" style="left:211px;width:278px;top:1431.00px;height:43.5px;"><span class="t" style="left:20.00px;top:10px;font-size:23.5px;transform:scaleX(1.0928);-webkit-text-stroke:0.35px;">ACCD | Account Director</span></div>
<div class="clip" style="left:491px;width:233px;top:1431.00px;height:43.5px;"><span class="t" style="left:60.70px;top:10px;font-size:23.5px;transform:scaleX(1.1281);-webkit-text-stroke:0.35px;">Account Director</span></div>
<span class="t" style="left:920.00px;top:1441.00px;font-size:23.5px;transform:scaleX(0.9286);-webkit-text-stroke:0.35px;">T</span>
<div class="clip" style="left:1205px;width:105px;top:1431.00px;height:43.5px;"><span class="t" style="left:18.00px;top:10px;font-size:23.5px;transform:scaleX(1.0337);-webkit-text-stroke:0.35px;">1,200.00</span></div>
<span class="t" style="left:1352.50px;top:1441.00px;font-size:23.5px;transform:scaleX(1.1138);-webkit-text-stroke:0.35px;">200.000000</span>
<span class="t" style="left:1818.61px;top:1441.00px;font-size:23.5px;transform:scaleX(1.0751);-webkit-text-stroke:0.35px;">0.00</span>
<span class="t" style="left:1878.79px;top:1441.00px;font-size:23.5px;transform:scaleX(0.9752);color:#666;-webkit-text-stroke:0.35px;">%</span>
<span class="t" style="left:1531.00px;top:1441.00px;font-size:23.5px;transform:scaleX(1.0874);-webkit-text-stroke:0.35px;">20,000.00</span>
<span class="t" style="left:1949.70px;top:1441.00px;font-size:23.5px;transform:scaleX(1.0955);-webkit-text-stroke:0.35px;">0.00</span>
<span class="t" style="left:2041.50px;top:1441.00px;font-size:23.5px;transform:scaleX(1.0932);-webkit-text-stroke:0.35px;">20,000.00</span>
<span class="t" style="left:2230.00px;top:1441.00px;font-size:23.5px;transform:scaleX(1.0909);-webkit-text-stroke:0.35px;">0.00</span>
<span class="t" style="left:2357.60px;top:1441.00px;font-size:23.5px;transform:scaleX(1.0955);-webkit-text-stroke:0.35px;">0.00</span>
<span class="t" style="left:2449.80px;top:1441.00px;font-size:23.5px;transform:scaleX(1.0913);-webkit-text-stroke:0.35px;">20,000.00</span>
</div>
<svg class="b" style="left:1648px;top:506px;" width="34" height="34" viewBox="0 0 34 34" fill="none" stroke="#000" stroke-linecap="round" stroke-linejoin="round"><circle cx="13.5" cy="13.5" r="8.25" stroke-width="3.5"/><path d="M20 20L28 27.5" stroke-width="3.8"/></svg>
</div>
</body></html>
